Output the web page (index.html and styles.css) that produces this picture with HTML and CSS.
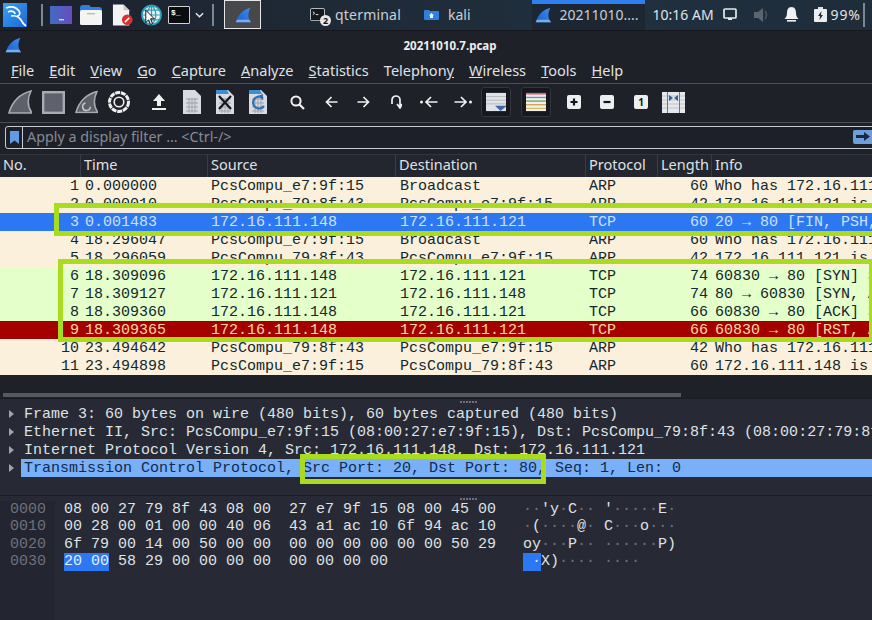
FILE: index.html
```html
<!doctype html>
<html>
    <head>
        <title>20211010.7.pcap</title>
        <meta charset="utf-8">
        <link rel="stylesheet" href="styles.css">
    </head>
    <body>
        <svg class="defs" width="0" height="0">
            <defs>
                <linearGradient id="finBlue" x1="0" y1="1" x2="1" y2="0">
                    <stop offset="0" stop-color="#1b5cc8"/>
                    <stop offset="1" stop-color="#3f8cf0"/>
                </linearGradient>
                <symbol id="fin" viewBox="0 0 24 24">
                    <path d="M1 23C4 12 12 4 23 1C19 9 19 16 24 23Z"/>
                </symbol>
                <symbol id="finBand" viewBox="0 0 24 24">
                    <path d="M3 19H21.500L24 23H1Z" fill="#79aeea"/>
                </symbol>
                <symbol id="doc" viewBox="0 0 20 26">
                    <path d="M1 1H13L19 7V25H1Z" fill="#d8dce2"/>
                    <path d="M4 10H16M4 14H16M4 18H16M4 22H16M7 9V24M10 9V24M13 9V24" stroke="#9ba1ab" stroke-width="1" fill="none"/>
                </symbol>
            </defs>
        </svg>

        <!-- desktop panel -->
        <div class="panel">
            <svg class="launcher kali-logo" viewBox="0 0 24 24">
                <defs>
                    <linearGradient id="kaliFill" x1="0" y1="0" x2="1" y2="1">
                        <stop offset="0" stop-color="#3aa0f0"/>
                        <stop offset="1" stop-color="#1c68d4"/>
                    </linearGradient>
                </defs>
                <rect width="24" height="24" fill="url(#kaliFill)"/>
                <path d="M3 5C8 3 13 4 16 8C18 11 16 13 14 13M5 9C9 7 12 9 12 11M8 13C12 12 16 14 18 17C19 19 20 21 23 23" fill="none" stroke="#fff" stroke-width="1.700"/>
            </svg>
            <span class="sep sep-a"></span>
            <svg class="launcher desk" viewBox="0 0 22 18">
                <defs>
                    <linearGradient id="deskFill" x1="0" y1="0" x2="1" y2="0">
                        <stop offset="0" stop-color="#3f6cc0"/>
                        <stop offset="1" stop-color="#6a4cc0"/>
                    </linearGradient>
                </defs>
                <rect width="22" height="18" fill="url(#deskFill)"/>
                <rect x="9" y="13" width="5" height="1.4" fill="#cfd6ee"/>
            </svg>
            <svg class="launcher folder" viewBox="0 0 22 20">
                <path d="M0 3Q0 0 3 0H9L11 2H19Q22 2 22 5V6H0Z" fill="#2f7fe0"/>
                <rect y="5" width="22" height="15" rx="1.5" fill="#f4f4f2"/>
                <rect x="7" y="8" width="8" height="1.4" fill="#b9bcc2"/>
            </svg>
            <svg class="launcher editor" viewBox="0 0 22 22">
                <path d="M1 0H12L18 6V22H1Z" fill="#f3f3f3"/>
                <path d="M12 0V6H18Z" fill="#c9c9c9"/>
                <circle cx="16" cy="16" r="5.6" fill="#d8322e"/>
                <path d="M13.5 18.5L18 14" stroke="#fff" stroke-width="1.6"/>
            </svg>
            <svg class="launcher globe" viewBox="0 0 22 22">
                <circle cx="11" cy="11" r="10" fill="#e8f4f6" stroke="#2f9fb4" stroke-width="2"/>
                <path d="M1 11H21M3 6H19M3 16H19M11 1V21M11 1C5 6 5 16 11 21M11 1C17 6 17 16 11 21" fill="none" stroke="#2f9fb4" stroke-width="1.3"/>
                <path d="M5 6V19L8 16L10 21L12 20L10 15H14Z" fill="#fff" stroke="#111" stroke-width="1"/>
            </svg>
            <span class="launcher term"><span>$_</span></span>
            <svg class="launcher chevron" viewBox="0 0 10 6">
                <path d="M1 1L5 5L9 1" fill="none" stroke="#e6e8ea" stroke-width="1.6"/>
            </svg>
            <span class="sep sep-b"></span>
            <span class="active-win">
                <svg class="fin-blue" viewBox="0 0 24 24"><use href="#fin"/><use href="#finBand"/></svg>
            </span>
            <span class="task task-term">
                <svg class="task-icon" viewBox="0 0 16 14">
                    <rect x="0.5" y="0.5" width="15" height="13" rx="1.5" fill="#15181d" stroke="#c5c9ce"/>
                    <path d="M3 4L5 5.5L3 7M6 7H9" fill="none" stroke="#e6e8ea"/>
                </svg>
                <span class="badge">2</span>
                <span class="task-label">qterminal</span>
            </span>
            <span class="task task-kali">
                <svg class="task-icon" viewBox="0 0 15 10">
                    <path d="M0 1Q0 0 1 0H5L6 1H14Q15 1 15 2V9Q15 10 14 10H1Q0 10 0 9Z" fill="#2f7fe0"/>
                    <path d="M7.5 3L5 5.5H6V8H9V5.5H10Z" fill="#fff"/>
                </svg>
                <span class="task-label">kali</span>
            </span>
            <span class="task task-on">
                <svg class="fin-small" viewBox="0 0 24 24"><use href="#fin"/><use href="#finBand"/></svg>
                <span class="task-label">20211010....</span>
            </span>
            <span class="clock">10:16 AM</span>
            <svg class="tray tray-mon" viewBox="0 0 14 13">
                <rect x="1" y="1" width="12" height="9" rx="1" fill="none" stroke="#e8eaec" stroke-width="1.7"/>
                <rect x="5" y="10" width="4" height="2" fill="#e8eaec"/>
            </svg>
            <svg class="tray tray-vol" viewBox="0 0 15 14">
                <path d="M0 4H4L9 0V14L4 10H0Z" fill="#5b6570"/>
                <path d="M11 3Q14 7 11 11" fill="none" stroke="#4a535e" stroke-width="1.5"/>
            </svg>
            <svg class="tray tray-bell" viewBox="0 0 15 15">
                <path d="M7.5 0C4 0 3 3 3 6C3 9 2 10 0.5 12H14.5C13 10 12 9 12 6C12 3 11 0 7.5 0Z" fill="#f0f1f2"/>
                <rect x="3" y="13" width="9" height="1.6" fill="#f0f1f2"/>
            </svg>
            <svg class="tray tray-bat" viewBox="0 0 13 15">
                <rect x="4" y="0" width="5" height="2" fill="#dfe2e5"/>
                <rect y="2" width="13" height="13" rx="1" fill="#eceef0"/>
                <path d="M7.5 4L4 9H6L5.500 13L9 8H7Z" fill="#20303f"/>
            </svg>
            <span class="battery">99%</span>
            <span class="sep sep-c"></span>
        </div>

        <!-- title bar -->
        <div class="titlebar">
            <svg class="title-fin" viewBox="0 0 24 24"><use href="#fin"/><use href="#finBand"/></svg>
            <span class="title-text">20211010.7.pcap</span>
        </div>

        <div class="menubar">
            <span><u>F</u>ile</span>
            <span><u>E</u>dit</span>
            <span><u>V</u>iew</span>
            <span><u>G</u>o</span>
            <span><u>C</u>apture</span>
            <span><u>A</u>nalyze</span>
            <span><u>S</u>tatistics</span>
            <span>Telephon<u>y</u></span>
            <span><u>W</u>ireless</span>
            <span><u>T</u>ools</span>
            <span><u>H</u>elp</span>
        </div>

        <div class="toolbar">
            <svg class="tool t-start" viewBox="0 0 24 24"><use href="#fin" fill="#5d6069" stroke="#a8abb1" stroke-width="1.600"/></svg>
            <svg class="tool t-stop" viewBox="0 0 23 23"><rect x="1.200" y="1.200" width="20.600" height="20.600" fill="#5f626c" stroke="#a8abb1" stroke-width="2.400"/></svg>
            <svg class="tool t-restart" viewBox="0 0 24 24">
                <use href="#fin" fill="#5d6069" stroke="#a8abb1" stroke-width="1.600"/>
                <path d="M11 13A4 4 0 1 0 16 17" fill="none" stroke="#c4c6ca" stroke-width="1.600"/>
            </svg>
            <svg class="tool t-gear" viewBox="0 0 24 24">
                <circle cx="12" cy="12" r="9.500" fill="none" stroke="#f0f0f0" stroke-width="3" stroke-dasharray="5 0.800"/>
                <circle cx="12" cy="12" r="4.800" fill="none" stroke="#f0f0f0" stroke-width="1.600"/>
            </svg>
            <svg class="tool t-up" viewBox="0 0 14 16">
                <path d="M7 0L13 7H9V12H5V7H1Z" fill="#f0f0f0"/>
                <rect y="14" width="14" height="2" fill="#f0f0f0"/>
            </svg>
            <svg class="tool t-doc" viewBox="0 0 20 26"><use href="#doc"/></svg>
            <svg class="tool t-close" viewBox="0 0 20 26">
                <use href="#doc"/>
                <path d="M1 1H12L14 5H1Z" fill="#3f8fd0"/>
                <path d="M4 7L16 20M16 7L4 20" stroke="#14161b" stroke-width="2.200"/>
            </svg>
            <svg class="tool t-reload" viewBox="0 0 20 26">
                <use href="#doc"/>
                <path d="M1 1H12L14 5H1Z" fill="#3f8fd0"/>
                <path d="M15 9A6 6 0 1 0 16 17" fill="none" stroke="#2f6fb8" stroke-width="2.200"/>
                <path d="M10 7L15 5V11Z" fill="#2f6fb8"/>
            </svg>
            <svg class="tool t-find" viewBox="0 0 15 15">
                <circle cx="6" cy="6" r="4.600" fill="none" stroke="#f0f0f0" stroke-width="2"/>
                <path d="M9.500 9.500L14 14" stroke="#f0f0f0" stroke-width="2.200"/>
            </svg>
            <svg class="tool t-arrow" viewBox="0 0 13 12"><path d="M12.500 6H2M6.500 1L1.500 6L6.500 11" fill="none" stroke="#f0f0f0" stroke-width="1.700"/></svg>
            <svg class="tool t-arrow2" viewBox="0 0 13 12"><path d="M0.500 6H11M6.500 1L11.500 6L6.500 11" fill="none" stroke="#f0f0f0" stroke-width="1.700"/></svg>
            <svg class="tool t-jump" viewBox="0 0 12 14"><path d="M2 9V5A4 4 0 0 1 10 5V12M7 9L10 13L12 9" fill="none" stroke="#f0f0f0" stroke-width="1.700"/></svg>
            <svg class="tool t-prev" viewBox="0 0 18 12">
                <circle cx="1.500" cy="6" r="1.500" fill="#f0f0f0"/>
                <path d="M17.500 6H7M11 1L6 6L11 11" fill="none" stroke="#f0f0f0" stroke-width="1.700"/>
            </svg>
            <svg class="tool t-next" viewBox="0 0 18 12">
                <circle cx="16.500" cy="6" r="1.500" fill="#f0f0f0"/>
                <path d="M0.500 6H11M7 1L12 6L7 11" fill="none" stroke="#f0f0f0" stroke-width="1.700"/>
            </svg>
            <span class="toggled t-auto">
                <svg viewBox="0 0 22 20">
                    <rect width="22" height="20" fill="#dfe2e6"/>
                    <path d="M0 4H22M0 8H22M0 12H22" stroke="#b3b7bd" stroke-width="1"/>
                    <path d="M10 14H22V15L16 20Z" fill="#3a66a8"/>
                </svg>
            </span>
            <span class="toggled t-color">
                <svg viewBox="0 0 22 20">
                    <rect width="22" height="20" fill="#eef0f2"/>
                    <path d="M0 1H22" stroke="#d94f4f" stroke-width="1.500"/>
                    <path d="M0 5H22" stroke="#6a8fd0" stroke-width="1.500"/>
                    <path d="M0 9H22" stroke="#5fb05f" stroke-width="1.500"/>
                    <path d="M0 13H22" stroke="#d9a050" stroke-width="1.500"/>
                    <path d="M0 17H22" stroke="#d9c060" stroke-width="1.500"/>
                </svg>
            </span>
            <svg class="tool t-zoom" viewBox="0 0 14 14">
                <rect width="14" height="14" rx="2" fill="#eceef0"/>
                <path d="M3.500 7H10.500M7 3.500V10.500" stroke="#14161b" stroke-width="2.200"/>
            </svg>
            <svg class="tool t-zoom2" viewBox="0 0 14 14">
                <rect width="14" height="14" rx="2" fill="#eceef0"/>
                <path d="M3.500 7H10.500" stroke="#14161b" stroke-width="2.200"/>
            </svg>
            <span class="tool t-one">1</span>
            <svg class="tool t-cols" viewBox="0 0 23 21">
                <rect width="23" height="21" fill="#e6e8eb"/>
                <path d="M0 4H23M0 8H23M0 12H23M0 16H23" stroke="#bfc3c8" stroke-width="1"/>
                <path d="M5.500 0V21M17.500 0V21" stroke="#70747b" stroke-width="1"/>
                <path d="M7 3L11 6L7 9ZM16 3L12 6L16 9Z" fill="#2f5f9c"/>
            </svg>
        </div>

        <div class="filter">
            <span class="bookmark">
                <svg viewBox="0 0 9 13"><path d="M0 0H9V13L4.500 9.500L0 13Z" fill="#5f9be6"/></svg>
            </span>
            <span class="filter-hint">Apply a display filter ... &lt;Ctrl-/&gt;</span>
            <span class="apply">
                <svg viewBox="0 0 19 13"><path d="M3 5H11V2L17 6.500L11 11V8H3Z" fill="#1b2a44"/></svg>
            </span>
        </div>

        <!-- packet list -->
        <div class="list-head">
            <span class="h-no">No.</span>
            <span class="h-time">Time</span>
            <span class="h-source">Source</span>
            <span class="h-dest">Destination</span>
            <span class="h-proto">Protocol</span>
            <span class="h-len">Length</span>
            <span class="h-info">Info</span>
        </div>

        <div class="packets">
            <div class="row arp"><span class="no">1</span><span class="time">0.000000</span><span>PcsCompu_e7:9f:15</span><span>Broadcast</span><span>ARP</span><span class="len">60</span><span class="info">Who has 172.16.111.121? Tell 172.16.111.148</span></div>
            <div class="row arp"><span class="no">2</span><span class="time">0.000010</span><span>PcsCompu_79:8f:43</span><span>PcsCompu_e7:9f:15</span><span>ARP</span><span class="len">42</span><span class="info">172.16.111.121 is at 08:00:27:79:8f:43</span></div>
            <div class="row picked"><span class="no">3</span><span class="time">0.001483</span><span>172.16.111.148</span><span>172.16.111.121</span><span>TCP</span><span class="len">60</span><span class="info">20 → 80 [FIN, PSH, URG] Seq=1 Win=8192</span></div>
            <div class="row arp"><span class="no">4</span><span class="time">18.296047</span><span>PcsCompu_e7:9f:15</span><span>Broadcast</span><span>ARP</span><span class="len">60</span><span class="info">Who has 172.16.111.121? Tell 172.16.111.148</span></div>
            <div class="row arp"><span class="no">5</span><span class="time">18.296059</span><span>PcsCompu_79:8f:43</span><span>PcsCompu_e7:9f:15</span><span>ARP</span><span class="len">42</span><span class="info">172.16.111.121 is at 08:00:27:79:8f:43</span></div>
            <div class="row tcp"><span class="no">6</span><span class="time">18.309096</span><span>172.16.111.148</span><span>172.16.111.121</span><span>TCP</span><span class="len">74</span><span class="info">60830 → 80 [SYN] Seq=0 Win=64240</span></div>
            <div class="row tcp"><span class="no">7</span><span class="time">18.309127</span><span>172.16.111.121</span><span>172.16.111.148</span><span>TCP</span><span class="len">74</span><span class="info">80 → 60830 [SYN, ACK] Seq=0 Ack=1</span></div>
            <div class="row tcp"><span class="no">8</span><span class="time">18.309360</span><span>172.16.111.148</span><span>172.16.111.121</span><span>TCP</span><span class="len">66</span><span class="info">60830 → 80 [ACK] Seq=1 Ack=1</span></div>
            <div class="row rst"><span class="no">9</span><span class="time">18.309365</span><span>172.16.111.148</span><span>172.16.111.121</span><span>TCP</span><span class="len">66</span><span class="info">60830 → 80 [RST, ACK] Seq=1 Ack=1</span></div>
            <div class="row arp"><span class="no">10</span><span class="time">23.494642</span><span>PcsCompu_79:8f:43</span><span>PcsCompu_e7:9f:15</span><span>ARP</span><span class="len">42</span><span class="info">Who has 172.16.111.148? Tell 172.16.111.121</span></div>
            <div class="row arp"><span class="no">11</span><span class="time">23.494898</span><span>PcsCompu_e7:9f:15</span><span>PcsCompu_79:8f:43</span><span>ARP</span><span class="len">60</span><span class="info">172.16.111.148 is at 08:00:27:e7:9f:15</span></div>
            <!-- highlight boxes drawn over the screenshot -->
            <div class="mark mark-one"></div>
            <div class="mark mark-two"></div>
        </div>

        <div class="hscroll"><span class="thumb"></span></div>

        <div class="pane-details">
            <div class="grip"></div>
            <div class="tree"><span class="arrow"></span>Frame 3: 60 bytes on wire (480 bits), 60 bytes captured (480 bits)</div>
            <div class="tree"><span class="arrow"></span>Ethernet II, Src: PcsCompu_e7:9f:15 (08:00:27:e7:9f:15), Dst: PcsCompu_79:8f:43 (08:00:27:79:8f:43)</div>
            <div class="tree"><span class="arrow"></span>Internet Protocol Version 4, Src: 172.16.111.148, Dst: 172.16.111.121</div>
            <div class="tree tree-on"><span class="arrow"></span><span class="band">Transmission Control Protocol, Src Port: 20, Dst Port: 80, Seq: 1, Len: 0</span></div>
            <div class="mark mark-three"></div>
        </div>

        <div class="pane-hex">
            <div class="grip"></div>
            <div class="hex-body">
                <div class="hex-line"><span class="off">0000</span><span class="bytes">08 00 27 79 8f 43 08 00  27 e7 9f 15 08 00 45 00</span><span class="ascii"><i>··</i>'y<i>·</i>C<i>··</i> '<i>·····</i>E<i>·</i></span></div>
                <div class="hex-line"><span class="off">0010</span><span class="bytes">00 28 00 01 00 00 40 06  43 a1 ac 10 6f 94 ac 10</span><span class="ascii"><i>·</i>(<i>····</i>@<i>·</i> C<i>···</i>o<i>···</i></span></div>
                <div class="hex-line"><span class="off">0020</span><span class="bytes">6f 79 00 14 00 50 00 00  00 00 00 00 00 00 50 29</span><span class="ascii">oy<i>···</i>P<i>··</i> <i>······</i>P)</span></div>
                <div class="hex-line"><span class="off">0030</span><span class="bytes"><b>20 00</b> 58 29 00 00 00 00  00 00 00 00</span><span class="ascii"><b> <i>·</i></b>X)<i>····</i> <i>····</i></span></div>
            </div>
        </div>
    </body>
</html>
```

FILE: styles.css
```css
* {
    box-sizing: border-box;
}

html, body {
    margin: 0;
    height: 620px;
    overflow: hidden;
}

body {
    width: 872px;
    background: #1f2129;
    color: #e4e6e9;
    font: 15px/18px "Noto Sans", sans-serif;
}

svg {
    display: block;
    flex: none;
}

.defs {
    position: absolute;
}

/* panel */

.panel {
    display: flex;
    align-items: center;
    height: 31px;
    padding-bottom: 1px;
    background: linear-gradient(90deg, #1c222c, #1f2a37 40%, #20303f 70%, #1f2d3b);
    border-bottom: 1px solid #14161b;
    font-size: 14px;
    color: #c9d0d6;
}

.launcher {
    flex: none;
}

.kali-logo { width: 24px; height: 24px; margin-left: 3px; }
.sep { width: 2px; height: 22px; background: #7d8793; flex: none; }
.sep-a { margin-left: 14px; }
.desk { width: 22px; height: 18px; margin-left: 7px; }
.folder { width: 22px; height: 20px; margin-left: 8px; }
.editor { width: 21px; height: 22px; margin-left: 10px; }
.globe { width: 21px; height: 22px; margin-left: 8px; }

.term {
    width: 22px;
    height: 18px;
    margin-left: 6px;
    background: #0b0c0e;
    border: 1px solid #d0d3d6;
    border-radius: 1px;
    color: #fff;
    font: bold 8px/11px "Liberation Mono", monospace;
    padding-left: 2px;
}

.chevron { width: 9px; height: 6px; margin-left: 5px; }
.sep-b { margin-left: 8px; }

.active-win {
    display: flex;
    align-items: center;
    justify-content: center;
    width: 37px;
    height: 29px;
    margin-left: 10px;
    background: #46484a;
    border: 1px solid #e4e6e8;
}

.fin-blue { width: 16px; height: 16px; fill: url(#finBlue); }
.fin-small { width: 16px; height: 16px; fill: url(#finBlue); }

.task {
    display: flex;
    align-items: center;
    height: 30px;
    position: relative;
}

.task-term { margin-left: 49px; }
.task-kali { margin-left: 23px; }
.task-icon { width: 15px; }

.task-term .task-label { margin-left: 10px; letter-spacing: 0.2px; }
.task-kali .task-label { margin-left: 9px; }

.badge {
    position: absolute;
    left: 10px;
    top: 15px;
    width: 11px;
    height: 11px;
    border-radius: 50%;
    background: #e8e8e8;
    color: #111;
    font: bold 9px/11px "Noto Sans", sans-serif;
    text-align: center;
}

.task-on {
    width: 113px;
    margin-left: 61px;
    padding: 0 0 4px 3px;
    background: #1c2733;
    border-top: 4px solid #2f7ff0;
    gap: 9px;
    align-self: flex-start;
}

.clock { margin-left: 8px; color: #e0e4e7; }
.tray { flex: none; }
.tray-mon { width: 14px; height: 13px; margin-left: 9px; }
.tray-vol { width: 15px; height: 14px; margin-left: 17px; }
.tray-bell { width: 15px; height: 15px; margin-left: 15px; }
.tray-bat { width: 13px; height: 15px; margin-left: 15px; }
.battery { margin-left: 4px; color: #e0e4e7; letter-spacing: 0.8px; }
.sep-c { margin-left: 2px; height: 24px; }

/* title and menu */

.titlebar {
    position: relative;
    display: flex;
    align-items: center;
    justify-content: center;
    height: 28px;
    padding: 2px 0 0 28px;
    font-size: 11.5px;
    font-weight: bold;
    color: #eceef0;
}

.title-fin {
    position: absolute;
    left: 5px;
    top: 6px;
    width: 16px;
    height: 16px;
    fill: url(#finBlue);
}

.menubar {
    display: flex;
    gap: 15.100px;
    height: 25px;
    padding: 2px 0 0 11px;
    border-bottom: 1px solid #4a4d55;
    font-size: 14.500px;
    color: #dfe1e4;
}

.toolbar {
    position: relative;
    height: 39px;
    padding-bottom: 2px;
    display: flex;
    align-items: center;
    border-bottom: 1px solid #4a4d55;
}

.tool { flex: none; }
.t-start { width: 24px; height: 24px; margin-left: 8px; }
.t-stop { width: 23px; height: 23px; margin-left: 10px; }
.t-restart { width: 23px; height: 24px; margin-left: 10px; }
.t-gear { width: 24px; height: 24px; margin-left: 9px; }
.t-up { width: 14px; height: 16px; margin-left: 21px; }
.t-doc { width: 20px; height: 26px; margin-left: 16px; }
.t-close { width: 20px; height: 26px; margin-left: 13px; }
.t-reload { width: 20px; height: 26px; margin-left: 13px; }
.t-find { width: 15px; height: 15px; margin-left: 22px; }
.t-arrow { width: 13px; height: 12px; margin-left: 20px; }
.t-arrow2 { width: 13px; height: 12px; margin-left: 19px; }
.t-jump { width: 12px; height: 14px; margin-left: 20px; }
.t-prev { width: 18px; height: 12px; margin-left: 18px; }
.t-next { width: 18px; height: 12px; margin-left: 16px; }

.toggled {
    flex: none;
    width: 30px;
    height: 30px;
    padding: 4px;
    background: #16181e;
    border: 1px solid #33363e;
    border-radius: 3px;
}

.toggled svg {
    width: 100%;
    height: 100%;
}

.t-auto { margin-left: 9px; }
.t-color { margin-left: 10px; }
.t-zoom { width: 14px; height: 14px; margin-left: 16px; }
.t-zoom2 { width: 14px; height: 14px; margin-left: 19px; }

.t-one {
    width: 14px;
    height: 14px;
    margin-left: 20px;
    border-radius: 2px;
    background: #eceef0;
    color: #14161b;
    font: bold 10px/14px "Noto Sans", sans-serif;
    text-align: center;
}

.t-cols { width: 23px; height: 21px; margin-left: 14px; }

/* display filter */

.filter {
    display: flex;
    align-items: center;
    width: 880px;
    height: 23px;
    margin: 3px 0 0 5px;
    border: 1px solid #c8cbd0;
    border-radius: 3px 0 0 3px;
    background: #1d2028;
}

.bookmark {
    display: flex;
    align-items: center;
    justify-content: center;
    width: 17px;
    height: 21px;
    border-right: 1px solid #c8cbd0;
}

.bookmark svg { width: 9px; height: 13px; }

.filter-hint {
    margin: -2px 0 0 4px;
    font-size: 14.300px;
    color: #878b95;
}

.apply {
    position: absolute;
    left: 853px;
    top: 130px;
    width: 19px;
    height: 14px;
    background: #6f9fd8;
    border-radius: 2px 0 0 2px;
}

/* packet list */

.list-head {
    display: grid;
    grid-template-columns: 81px 127px 188px 190px 72px 54px 1fr;
    height: 23px;
    margin-top: 5px;
    background: #23262f;
    border-top: 1px solid #32353d;
    font-size: 14.500px;
    line-height: 19px;
    color: #dfe1e4;
}

.list-head span {
    padding-left: 3px;
    border-right: 1px solid #3a3d45;
}

.list-head .h-info { border-right: 0; }

.packets {
    position: relative;
    height: 198px;
    font: 15px/20px "Liberation Mono", monospace;
    color: #12272e;
}

.row {
    display: grid;
    grid-template-columns: 79px 132px 189px 189px 72px 47px 1fr;
    height: 18px;
    white-space: nowrap;
    overflow: hidden;
}

.row span { overflow: hidden; }
.no { text-align: right; }
.time { padding-left: 6px; }
.len { text-align: right; }
.info { padding-left: 7px; }

.arp { background: #faf0dc; }
.tcp { background: #e4ffc9; }
.picked { background: #2b78f2; color: #cfe0fb; }
.rst { background: #a40000; color: #ffd9a0; }

/* green boxes: they sit over the list and the tree, not in the flow */

.mark {
    position: absolute;
    border: 5px solid #a9dc1e;
}

.mark-one { left: 54px; top: 26px; width: 830px; height: 33px; }
.mark-two { left: 58px; top: 82px; width: 816px; height: 83px; }
.mark-three { left: 300px; top: 55px; width: 246px; height: 30px; }

.hscroll {
    height: 23px;
    padding-top: 18px;
}

.thumb {
    display: block;
    width: 678px;
    height: 4px;
    margin-left: 3px;
    background: #565960;
}

/* packet details */

.pane-details {
    position: relative;
    height: 97px;
    background: #272a34;
    border-top: 1px solid #1b1d24;
    font: 15px/20px "Liberation Mono", monospace;
    color: #dfe2e6;
    overflow: hidden;
}

.grip {
    width: 17px;
    height: 2px;
    margin: 2px 0 2px 460px;
    background: repeating-linear-gradient(90deg, #6f727a 0 2px, transparent 2px 3px);
}

.tree {
    position: relative;
    height: 18px;
    padding-left: 24px;
    white-space: pre;
}

.arrow {
    position: absolute;
    left: 9px;
    top: 5px;
    border-left: 5px solid #a0a3a9;
    border-top: 4px solid transparent;
    border-bottom: 4px solid transparent;
}

.tree-on { padding-left: 21px; }

.band {
    display: block;
    height: 18px;
    padding-left: 3px;
    background: #79b0f7;
    color: #10294e;
}

/* hex */

.pane-hex {
    height: 125px;
    background: #272a34;
    border-top: 1px solid #1b1d24;
    font: 15px/17.330px "Liberation Mono", monospace;
}

.pane-hex .grip {
    margin-bottom: 1px;
}

.hex-body {
    height: 120px;
    background: linear-gradient(90deg, #232630 55px, #272a34 55px);
}

.hex-line {
    display: flex;
    height: 17.330px;
    white-space: pre;
}

.off {
    width: 64px;
    padding-left: 10px;
    color: #6e727a;
}

.bytes {
    width: 459px;
    color: #dfe2e6;
}

.ascii {
    color: #dfe2e6;
}

.ascii i {
    font-style: normal;
    color: #6e727a;
}

.hex-line b {
    font-weight: normal;
    background: #2b78f2;
    color: #e6effe;
    display: inline-block;
    height: 18px;
}

.ascii b i {
    color: #d5e4fb;
}
```
